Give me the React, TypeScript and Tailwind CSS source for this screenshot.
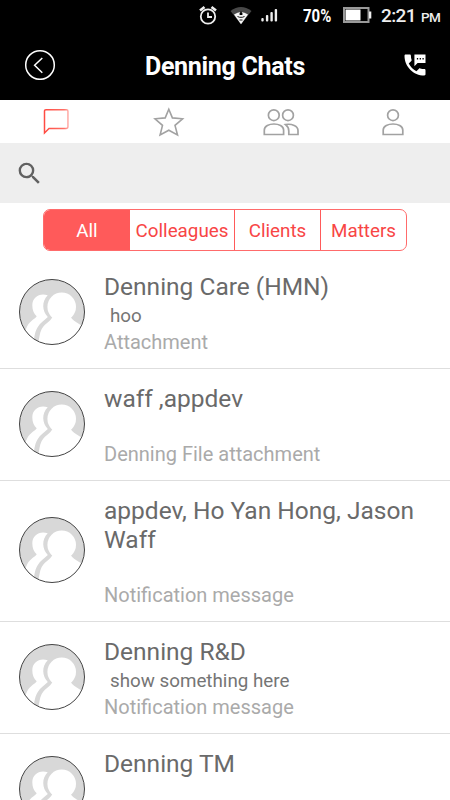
import { MdSearch } from "react-icons/md";

type Chat = {
  id: number;
  title: string;
  subtitle?: string;
  message: string;
};

const chats: Chat[] = [
  { id: 1, title: "Denning Care (HMN)", subtitle: "hoo", message: "Attachment" },
  { id: 2, title: "waff ,appdev", message: "Denning File attachment" },
  { id: 3, title: "appdev, Ho Yan Hong, Jason Waff", message: "Notification message" },
  { id: 4, title: "Denning R&D", subtitle: "show something here", message: "Notification message" },
  { id: 5, title: "Denning TM", message: "" },
];

function StatusBar() {
  return (
    <div className="flex h-8 items-center pl-[199px] text-white">
      <svg className="-mt-0.5" width="18" height="20" viewBox="0 0 18 20" fill="none" stroke="#eee" strokeWidth="1.8">
        <circle cx="9" cy="11.5" r="7.2" />
        <path d="M9 7.5v4.5h4" />
        <path d="M1 5.5 5.5 2M12.5 2l4.5 3.5" strokeWidth="2.6" />
      </svg>
      <svg className="-mt-0.5 ml-[13px]" width="22" height="20" viewBox="0 0 22 20">
        <path d="M0.5 6Q11-2 21.5 6L11 19.3Z" fill="#484848" />
        <path d="M4 9.5Q11 4.5 18 9.5L11 19.3Z" fill="#f5f5f5" />
        <path d="M9.6 8.5 11 6l1.4 2.5v1.5H9.6Z" fill="#000" />
        <path d="M7.5 11.5l2.2.8h2.6l2.2-.8M9.5 15h3" stroke="#000" fill="none" strokeWidth="0.9" />
      </svg>
      <svg className="-mt-0.5 ml-[9px]" width="17" height="14" viewBox="0 0 17 14" fill="#eee">
        <rect x="0.3" y="10" width="2.4" height="3.5" rx="1" />
        <rect x="4.9" y="7" width="2.4" height="6.5" rx="1" />
        <rect x="9.4" y="4" width="2.4" height="9.5" rx="1" />
        <rect x="13.7" y="1" width="2.4" height="12.5" rx="1" />
      </svg>
      <span className="-mt-px ml-[25px] w-[40px] origin-left scale-x-[0.83] whitespace-nowrap text-[18px] font-bold leading-5">
        70%
      </span>
      <svg className="-mt-0.5" width="29" height="16" viewBox="0 0 29 16">
        <rect x="1" y="1" width="24.5" height="14" fill="#000" stroke="#999" strokeWidth="2" />
        <rect x="2.5" y="2.5" width="15" height="11" fill="#fff" />
        <rect x="26" y="4.5" width="2.3" height="7" fill="#eee" />
      </svg>
      <span className="-mt-px ml-[9px] w-[34px] whitespace-nowrap text-[19px] font-medium leading-5 tracking-[-0.6px] text-[#eee]">
        2:21
      </span>
      <span className="ml-[6px] mt-[2px] text-[13.5px] font-medium leading-4 tracking-[-0.6px] text-[#eee]">PM</span>
    </div>
  );
}

function Header() {
  return (
    <header className="flex h-[68px] items-center justify-between pl-6 pr-[21px] text-white">
      <svg className="mb-1" width="32" height="32" viewBox="0 0 32 32" fill="none" stroke="currentColor" strokeWidth="1.5">
        <circle cx="16" cy="17" r="14.3" />
        <path d="M18.3 10 10.6 17.3l7.7 7.5" />
      </svg>
      <h1 className="-ml-[7px] mt-[2px] text-[25px] font-bold leading-8 tracking-[-0.3px]">Denning Chats</h1>
      <svg className="mb-[3px]" width="28" height="28" viewBox="0 0 24 24">
        <path
          d="M20 15.5c-1.25 0-2.45-.2-3.57-.57-.35-.11-.74-.03-1.02.24l-2.2 2.2c-2.83-1.44-5.15-3.75-6.59-6.58l2.2-2.21c.28-.27.36-.66.25-1.01C8.7 6.45 8.5 5.25 8.5 4c0-.55-.45-1-1-1H4c-.55 0-1 .45-1 1 0 9.39 7.61 17 17 17 .55 0 1-.45 1-1v-3.5c0-.55-.45-1-1-1Z"
          fill="currentColor"
        />
        <path d="M11.5 3v10l2.7-2.8H21V3Z" fill="currentColor" />
        <path d="M13.6 6.1h1.1v1.1h-1.1ZM16 6.1h1.1v1.1h-1.1ZM18.4 6.1h1.1v1.1h-1.1Z" fill="#000" />
      </svg>
    </header>
  );
}

function Tabs() {
  return (
    <nav className="grid h-[43px] grid-cols-4 items-center justify-items-center">
      <svg className="mb-[2px]" width="28" height="28" viewBox="0 0 28 28" fill="none" strokeWidth="1.5">
        <defs>
          <linearGradient id="bubble" gradientUnits="userSpaceOnUse" x1="2" y1="0" x2="27" y2="0">
            <stop offset="0" stopColor="#ff4b42" />
            <stop offset="0.8" stopColor="#ff7066" />
            <stop offset="1" stopColor="#ffb8b5" />
          </linearGradient>
        </defs>
        <path d="M2.5 26V3.8Q2.5 2.8 4 2.8H24.5Q26 2.8 26 4.3V19.5Q26 21.5 24 21.5H7Z" stroke="url(#bubble)" />
      </svg>
      <svg width="32" height="32" viewBox="0 0 32 32" fill="none" stroke="#a2a2a2" strokeWidth="1.6">
        <path d="M15.8 3.3 19.4 11.9 29.6 12.8 22 19.4 24.5 29 15.8 24.2 7.1 29 9.5 19.4 2 12.8 12.2 11.9Z" />
      </svg>
      <svg width="36" height="30" viewBox="0 0 36 30" fill="none" stroke="#a2a2a2" strokeWidth="1.7">
        <circle cx="10.8" cy="8.2" r="5.4" />
        <circle cx="25" cy="8.2" r="5.4" />
        <path d="M1.3 27.5V23C1.3 15 20.6 15 20.6 23V27.5ZM22.5 17.5C29 16.5 35 19 35 23.5V27.5H25.8V24Q25.8 20 22.5 17.5Z" />
      </svg>
      <svg className="-ml-0.5" width="24" height="30" viewBox="0 0 24 30" fill="none" stroke="#a2a2a2" strokeWidth="1.7">
        <circle cx="12" cy="8.2" r="5.4" />
        <path d="M2.2 27.5V23C2.2 15 21.8 15 21.8 23V27.5Z" />
      </svg>
    </nav>
  );
}

function Filters() {
  return (
    <div className="ml-[43px] mt-[6px] flex h-[42px] w-[364px] overflow-hidden rounded-[7px] border border-[#ff6b6b] text-[18.8px] text-[#f84545]">
      <button className="w-[86px] bg-[#ff5a5a] pt-0.5 text-white">All</button>
      <button className="w-[105px] border-r border-[#ff5a5a] pt-0.5">Colleagues</button>
      <button className="w-[86px] border-r border-[#ff5a5a] pt-0.5">Clients</button>
      <button className="flex-1 pt-0.5">Matters</button>
    </div>
  );
}

function GroupAvatar() {
  return (
    <svg className="mb-0.5 shrink-0" width="66" height="66" viewBox="0 0 66 66">
      <defs>
        <clipPath id="avatar">
          <circle cx="33" cy="33" r="32.5" />
        </clipPath>
      </defs>
      <g clipPath="url(#avatar)">
        <rect width="66" height="66" fill="#d8d8d8" />
        <path
          d="M28.7 16.3C21 13.5 13.3 18 13.3 26.3C13.3 31 15 35 17.7 37.3C16 40 11.5 41.5 8.3 47L0 66H14.5C15 57 16.5 51.5 18.8 48C21.5 43.5 25 41.5 28.8 38C23 32 22.5 22.5 28.7 16.3Z"
          fill="#fff"
        />
        <circle cx="42.7" cy="27.8" r="14.3" fill="#fff" />
        <path
          d="M34 36C33.5 41.5 26.5 43.5 22.7 50C20.5 54 20.3 59 19 66H66V50C62 44 52 42.5 51 36Z"
          fill="#fff"
        />
      </g>
      <circle cx="33" cy="33" r="32.5" fill="none" stroke="#444" strokeWidth="1" />
    </svg>
  );
}

function ChatRow({ chat }: { chat: Chat }) {
  return (
    <li className="flex shrink-0 items-center border-b border-[#dedede] pl-[19px]">
      <GroupAvatar />
      <div className="ml-[19px] w-[335px] pb-[13px] pt-[15px]">
        <div className="text-[24.5px] leading-[29px] text-[#6a6a6a]">{chat.title}</div>
        <div className="mt-px h-[28px] pl-[6px] text-[18.8px] leading-[28px] text-[#757575]">
          {chat.subtitle}
        </div>
        <div className="h-[25px] text-[20px] leading-[25px] text-[#aaa]">{chat.message}</div>
      </div>
    </li>
  );
}

export default function App() {
  return (
    <div className="flex h-[800px] w-[450px] flex-col overflow-hidden bg-white font-['Roboto',sans-serif]">
      <div className="shrink-0 bg-black">
        <StatusBar />
        <Header />
      </div>
      <Tabs />
      <div className="flex h-[60px] shrink-0 items-center bg-[#eee] pl-[15px] text-[#616161]">
        <MdSearch size={29} />
      </div>
      <div className="h-[54px] shrink-0">
        <Filters />
      </div>
      <ul className="flex min-h-0 flex-1 flex-col overflow-hidden">
        {chats.map((chat) => (
          <ChatRow key={chat.id} chat={chat} />
        ))}
      </ul>
    </div>
  );
}
